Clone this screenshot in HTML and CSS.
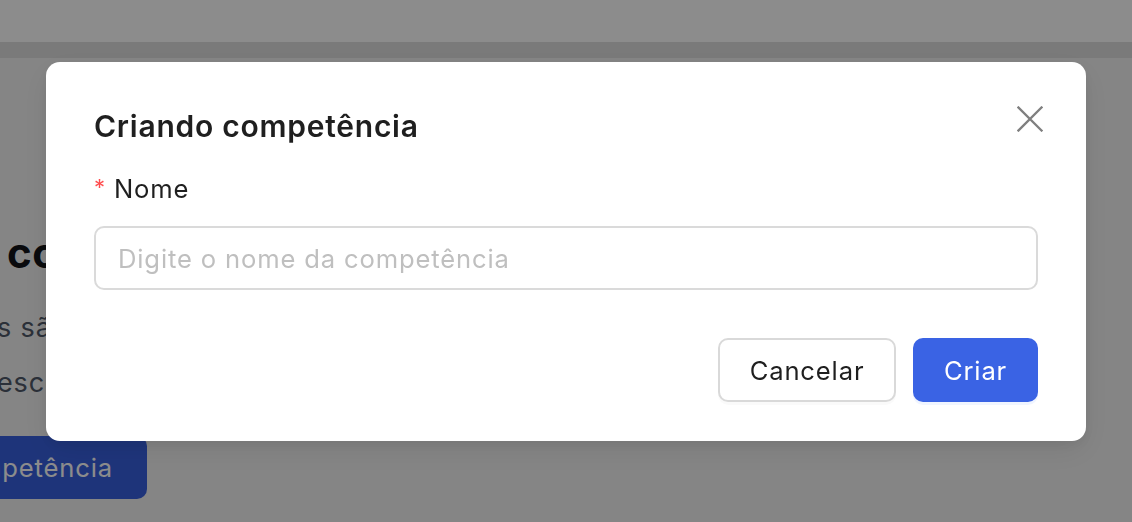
FILE: index.html
```html
<!DOCTYPE html>
<html lang="pt-BR">
<head>
<meta charset="utf-8">
<title>Criando competência</title>
<link rel="stylesheet" href="styles.css">
</head>
<body>
<div class="page">
  <header class="topbar"></header>
  <div class="subbar"></div>
  <main class="content">
    <h1 class="heading">competências</h1>
    <p class="lead">
      <span class="line">s são as habilidades que você deseja avaliar</span>
      <span class="line">escolha as competências da sua equipe</span>
    </p>
    <div class="btn-slot">
      <button class="btn-new" type="button">Nova competência</button>
    </div>
  </main>
</div>

<div class="mask"></div>

<div class="modal" role="dialog" aria-labelledby="modal-title">
  <button class="close" type="button" aria-label="Fechar">
    <svg viewBox="0 0 26 26" width="26" height="26" aria-hidden="true">
      <path d="M1.5 1.5 L24.5 24.5 M24.5 1.5 L1.5 24.5" stroke="currentColor" stroke-width="2.3" stroke-linecap="square" fill="none"/>
    </svg>
  </button>
  <h2 class="modal-title" id="modal-title">Criando competência</h2>
  <label class="field-label" for="nome"><span class="req">*</span>Nome</label>
  <input class="field-input" id="nome" type="text" placeholder="Digite o nome da competência">
  <div class="footer">
    <button class="btn btn-default" type="button">Cancelar</button>
    <button class="btn btn-primary" type="button">Criar</button>
  </div>
</div>
</body>
</html>
```

FILE: styles.css
```css
* { box-sizing: border-box; }

html, body {
  margin: 0;
  height: 522px;
  overflow: hidden;
}

body {
  font-family: Inter, "Noto Sans", "Liberation Sans", sans-serif;
  background: #f2f2f2;
  letter-spacing: 0.85px;
}

.page {
  display: flex;
  flex-direction: column;
  height: 522px;
}

.topbar {
  height: 42px;
  background: #ffffff;
  flex: none;
}

.subbar {
  height: 16px;
  background: #dedede;
  flex: none;
}

.content {
  flex: 1;
  background: #f2f2f2;
  padding: 169px 0 0 7px;
  display: flex;
  flex-direction: column;
}

.heading {
  margin: 0;
  font-size: 42px;
  line-height: 52px;
  font-weight: 700;
  letter-spacing: 0.5px;
  color: #111318;
  white-space: nowrap;
}

.lead {
  margin: 21px 0 0 -10px;
  font-size: 27px;
  line-height: 55px;
  color: #4f5868;
  white-space: nowrap;
}

.line { display: block; }

.btn-slot {
  margin-top: 26px;
  width: 147px;
  margin-left: -7px;
  display: flex;
  justify-content: flex-end;
}

.btn-new {
  flex: none;
  height: 63px;
  padding: 0 34px;
  border: 0;
  border-radius: 10px;
  background: #3860df;
  color: #ffffff;
  font-family: inherit;
  font-size: 25.6px;
  letter-spacing: 0.85px;
  white-space: nowrap;
}

.mask {
  position: fixed;
  inset: 0;
  background: rgba(0, 0, 0, 0.45);
}

.modal {
  position: fixed;
  left: 46px;
  top: 62px;
  width: 1040px;
  height: 379px;
  background: #ffffff;
  border-radius: 14px;
  padding: 44px 48px 0 48px;
  display: flex;
  flex-direction: column;
  box-shadow: 0 10px 30px rgba(0, 0, 0, 0.08), 0 4px 12px rgba(0, 0, 0, 0.06);
}

.close {
  position: absolute;
  top: 43px;
  right: 43px;
  width: 27px;
  height: 27px;
  padding: 0;
  border: 0;
  background: transparent;
  color: #7f7f7f;
  display: flex;
  align-items: center;
  justify-content: center;
}

.modal-title {
  margin: 0;
  font-size: 30px;
  line-height: 40px;
  font-weight: 600;
  letter-spacing: 0.75px;
  color: #1f1f1f;
}

.field-label {
  margin-top: 21px;
  font-size: 25.6px;
  line-height: 40px;
  color: #1f1f1f;
}

.req {
  color: #ff4d4f;
  font-size: 22px;
  margin-right: 8px;
  vertical-align: 3px;
}

.field-input {
  margin-top: 17px;
  height: 64px;
  width: 100%;
  border: 2px solid #dadada;
  border-radius: 10px;
  padding: 0 22px;
  font-family: inherit;
  font-size: 25.6px;
  letter-spacing: 0.85px;
  color: #1f1f1f;
  background: #ffffff;
  outline: none;
}

.field-input::placeholder {
  color: #bfbfbf;
}

.footer {
  margin-top: 48px;
  display: flex;
  justify-content: flex-end;
  gap: 17px;
}

.btn {
  height: 64px;
  border-radius: 10px;
  font-family: inherit;
  font-size: 25.6px;
  letter-spacing: 0.85px;
  padding: 0;
  white-space: nowrap;
}

.btn-default {
  width: 178px;
  background: #ffffff;
  border: 2px solid #d9d9d9;
  color: #1f1f1f;
  box-shadow: 0 3px 0 rgba(0, 0, 0, 0.02);
}

.btn-primary {
  width: 125px;
  background: #3a63e4;
  border: 0;
  color: #ffffff;
  box-shadow: 0 3px 0 rgba(5, 90, 255, 0.06);
}
```
